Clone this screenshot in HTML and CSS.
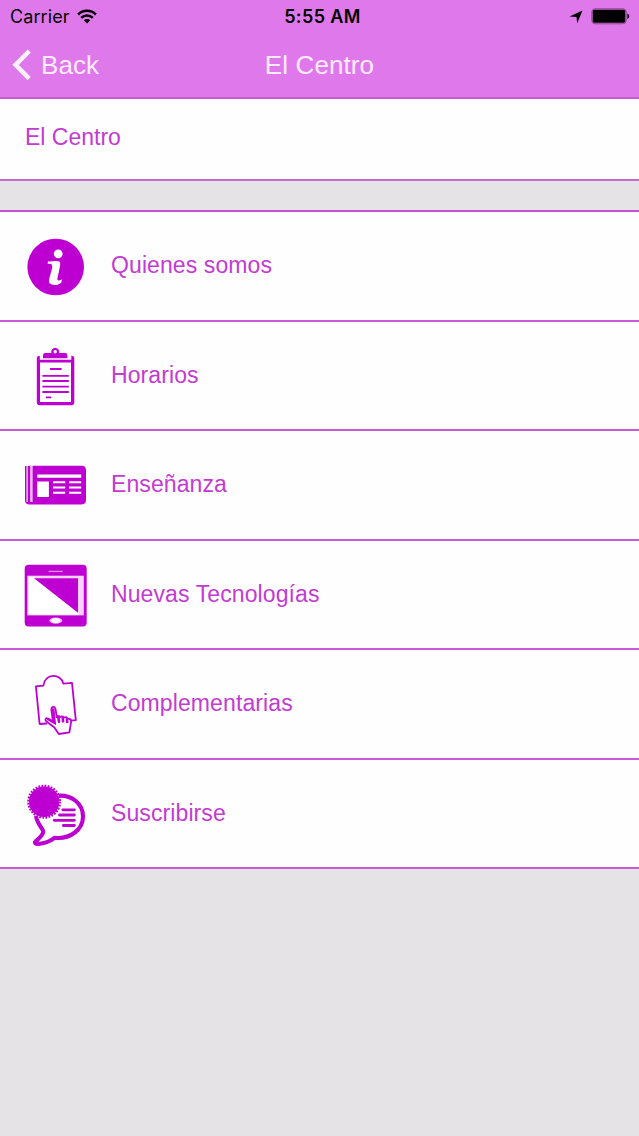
FILE: index.html
```html
<!DOCTYPE html>
<html lang="es">
<head>
<meta charset="utf-8">
<title>El Centro</title>
<link rel="stylesheet" href="styles.css">
</head>
<body>
<header class="header">
  <div class="status">
    <div class="carrier"><span>Carrier</span>
      <svg width="20" height="15" viewBox="0 0 20 15"><g fill="none" stroke="#000" stroke-width="2.5"><path d="M1.1 5.5a12.7 12.7 0 0 1 17.8 0"/><path d="M4.2 8.8a8.3 8.3 0 0 1 11.6 0"/></g><path d="M6.8 11.2a4.6 4.6 0 0 1 6.4 0L10 14.4z"/></svg>
    </div>
    <div class="time">5:55 AM</div>
    <div class="indicators">
      <svg width="14" height="14" viewBox="0 0 14 14"><path d="M13.5.5 8.2 13.3 7.5 7 .5 6.4z"/></svg>
      <svg width="39" height="17" viewBox="0 0 39 17"><rect x=".8" y=".8" width="34.4" height="15" rx="3.2" fill="none" stroke="#8a448f" stroke-width="1"/><rect x="1.7" y="1.8" width="32.6" height="13" rx="1.8"/><path d="M36.4 5.8c2.4.5 2.4 4.6 0 5.1z"/></svg>
    </div>
  </div>
  <nav class="navbar">
    <div class="back">
      <svg width="20" height="32" viewBox="0 0 20 32"><path d="M17.2 2 3.6 15.8 17.2 29.6" fill="none" stroke="#fff0ff" stroke-width="4.6"/></svg>
      <span>Back</span>
    </div>
    <h1 class="title">El Centro</h1>
  </nav>
</header>
<main>
  <h2 class="section">El Centro</h2>
  <ul class="menu">
    <li class="row">
      <svg class="icon" viewBox="0 0 62 64"><circle cx="31.7" cy="32" r="28.3"/><g fill="#fff"><circle cx="34.2" cy="18.8" r="4.4"/><path d="M23.6 28.8 24 26.2C28 27.2 30.5 25 35.6 26.6 37 29 35.6 33 34.8 37L33.4 43.2C33 45.8 35 46 37.9 44.2L37.4 47.4C34 50.8 24.6 51.4 25 45.6 25.2 42 28.5 34 28.3 31 28 28.4 26 28.6 23.6 28.8z"/></g></svg>
      <span>Quienes somos</span>
    </li>
    <li class="row">
      <svg class="icon" viewBox="0 0 62 64"><path d="M19 13.3v-3.1q0-2.2 2.2-2.2h6.2a4 4 0 1 1 7.6 0h6.2q2.2 0 2.2 2.2v3.1z"/><circle cx="31.2" cy="6.7" r="1.7" fill="#fff"/><path d="M15.8 10.8q-3 .1-3 3v43.4q0 3 3 3h31.5q3 0 3-3V13.8q0-2.9-3-3v4H15.8z"/><path fill="#fff" d="M16 17.6h31v39.4H16z"/><path d="M26 24h11.6M18.4 30.8h26.4M18.4 36h26.4M18.4 41.6h26.4M18.4 47h26.4M22 52.3h5.3" stroke="currentColor" stroke-width="1.8"/></svg>
      <span>Horarios</span>
    </li>
    <li class="row">
      <svg class="icon" viewBox="0 0 62 64"><path d="M1 12v34q0 4.4 4 4.4h52.5q4.5 0 4.5-4.4V16q0-4.3-4.5-4.3h-49V48h-1V11.7H5.4V48h-1V12z"/><path d="M3.1 12v36M6.9 12v36" stroke="#fff" stroke-width="1.1"/><path d="M5 12v37" stroke="currentColor" stroke-width="2"/><g fill="#fff"><path d="M13.2 20.4h44v3.4h-44zM13.2 27.4h11.7V43H13.2z"/></g><path d="M29 28.3h12.2M45 28.3h12.2M29 33.4h12.2M45 33.4h12.2M29 38.7h12.2M45 38.7h12.2" stroke="#fff" stroke-width="2"/></svg>
      <span>Enseñanza</span>
    </li>
    <li class="row">
      <svg class="icon" viewBox="0 0 62 64"><rect x=".7" y=".8" width="62" height="61.7" rx="4"/><rect x="3.3" y="11.7" width="56.5" height="39.7" fill="#f8d2fa"/><path fill="#fff" d="M4.7 13.3H10L55 48.8v1.7H4.7z"/><path d="M10 14.2h44v34.5z"/><path d="M24.5 7.4h14.2" stroke="#e38bea" stroke-width="1.3"/><ellipse cx="31.8" cy="56.6" rx="6.4" ry="3.1" fill="#f3b9f6"/><ellipse cx="31.8" cy="56.6" rx="4.4" ry="2.4" fill="#fff"/></svg>
      <span>Nuevas Tecnologías</span>
    </li>
    <li class="row">
      <svg class="icon" viewBox="0 0 62 64"><g fill="none" stroke="currentColor" stroke-width="1.8" stroke-linejoin="round"><path d="M23 50.5 15.6 51 11.9 13.4 19.4 12.6C21 0 37 0 39.3 10.6L48 9.8 51.8 47.2 47 47.7"/><path d="M34.8 61 30.4 54.5 22.2 48.2Q20.4 46 22.9 45.2L29 49 27.3 36.5q.2-3.3 3-2.4l1.2 1.8 1.2 8.2q1.2-2.2 3.4 0 2-1.7 4 .4 2.2-1.2 3.5 1.2 3.2-.3 3.6 2.5l-1.8 11.1z"/></g><path d="m29.2 36.6 1.4 13.2-6.2-3.7M34.3 43.7l.7 5M38.7 44.3l.4 4M43 46l.2 3" fill="none" stroke="currentColor" stroke-width="2.6" stroke-linecap="round"/></svg>
      <span>Complementarias</span>
    </li>
    <li class="row">
      <svg class="icon" viewBox="0 0 62 64"><path d="M12 33C13.2 41.5 19 45.4 19.2 48.5 19.2 53 13 56.6 11 59.2 10.7 63.3 25 59.5 30.5 54.7 46 56.5 59 46.8 59 33.5 59 20.5 48 12 34.5 12.7" fill="none" stroke="currentColor" stroke-width="4.1" stroke-linejoin="round"/><circle cx="20.2" cy="18.7" r="15.2"/><circle cx="20.2" cy="18.7" r="15.8" fill="none" stroke="currentColor" stroke-width="2.4" stroke-dasharray="1.75 1.35"/><path d="M38.8 26.8h11.6M35.5 32h14.9M30.2 37.3h20.2M39.4 42.5h11" stroke="currentColor" stroke-width="2.8" stroke-linecap="round"/></svg>
      <span>Suscribirse</span>
    </li>
  </ul>
</main>
</body>
</html>
```
FILE: styles.css
```css
* { box-sizing: border-box; }
body {
  margin: 0;
  min-height: 1136px;
  background: #e6e3e6;
  font-family: "Liberation Sans", Arial, sans-serif;
  color: #c33bd2;
}
h1, h2, ul { margin: 0; padding: 0; font-weight: 400; }
svg { display: block; flex: none; }
.header {
  height: 99px;
  background: #df79eb;
  border-bottom: 2px solid #c65bd2;
}
.status {
  display: grid;
  grid-template-columns: 1fr auto 1fr;
  align-items: center;
  height: 32px;
  padding: 0 9px 0 10px;
  font: 18px/32px Inter, sans-serif;
  color: #000;
}
.carrier { display: flex; align-items: center; gap: 7px; letter-spacing: .1px; }
.carrier span, .time { padding-top: 1px; }
.time { font-weight: 600; letter-spacing: .4px; padding-left: 5px; }
.indicators { display: flex; justify-content: flex-end; align-items: center; gap: 8px; }
.navbar {
  display: grid;
  grid-template-columns: 1fr auto 1fr;
  height: 66px;
  align-items: center;
  font-size: 26px;
  color: #ffebff;
}
.back { display: flex; align-items: center; gap: 9px; padding-left: 12px; letter-spacing: .1px; }
.title { font-size: 26px; letter-spacing: .1px; }
.section {
  height: 82px;
  padding: 0 25px 5px;
  line-height: 77px;
  font-size: 23px;
  background: #fefefe;
  border-bottom: 2px solid #c46ad0;
}
.menu {
  margin-top: 29px;
  border-top: 2px solid #c750d5;
  list-style: none;
  background: #fefefe;
}
.row {
  display: flex;
  align-items: center;
  gap: 25px;
  height: 109.5px;
  padding-left: 24px;
  border-bottom: 2px solid #c85bd5;
  font-size: 23px;
  letter-spacing: .1px;
}
.icon { width: 62px; height: 64px; margin-top: 3px; overflow: visible; fill: #bd00d1; color: #bd00d1; }
```
